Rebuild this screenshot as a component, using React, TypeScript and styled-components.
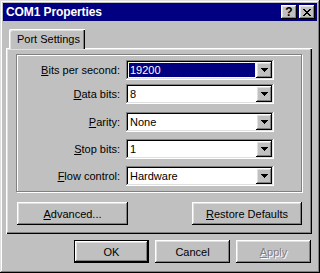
import styled, { createGlobalStyle } from 'styled-components'

const GlobalStyle = createGlobalStyle`
    html, body {
        margin: 0;
        padding: 0;
        background: #c0c0c0;
    }
    body {
        font-family: "Liberation Sans", Arial, sans-serif;
        font-size: 11px;
        color: #000;
    }
`

const raised = `
    box-shadow: inset -1px -1px #000, inset 1px 1px #fff, inset -2px -2px #808080, inset 2px 2px #dfdfdf;
`

const sunken = `
    box-shadow: inset -1px -1px #fff, inset 1px 1px #808080, inset -2px -2px #dfdfdf, inset 2px 2px #000;
`

const Window = styled.div`
    width: 320px;
    height: 273px;
    box-sizing: border-box;
    padding: 3px;
    display: flex;
    flex-direction: column;
    background: #c0c0c0;
    box-shadow: inset -1px -1px #000, inset 1px 1px #dfdfdf, inset -2px -2px #808080, inset 2px 2px #fff;
`

const TitleBar = styled.div`
    height: 18px;
    flex-shrink: 0;
    display: flex;
    align-items: center;
    justify-content: space-between;
    padding: 0 2px 0 3px;
    background: #000080;
`

const Title = styled.span`
    color: #fff;
    font-weight: bold;
    font-size: 12px;
    letter-spacing: -0.1px;
`

const TitleButtons = styled.div`
    display: flex;
    gap: 2px;
`

const TitleButton = styled.div`
    width: 16px;
    height: 14px;
    display: flex;
    align-items: center;
    justify-content: center;
    background: #c0c0c0;
    font-weight: bold;
    font-size: 12px;
    line-height: 14px;
    ${raised}
`

const Body = styled.div`
    display: flex;
    flex-direction: column;
    padding: 8px 5px 0 3px;
`

const TabStrip = styled.div`
    display: flex;
    padding-left: 3px;
`

const Tab = styled.div`
    position: relative;
    z-index: 1;
    width: 76px;
    height: 20px;
    margin-bottom: -1px;
    box-sizing: border-box;
    padding: 4px 0 0 8px;
    background: #c0c0c0;
    border-top-left-radius: 2px;
    box-shadow: inset 1px 1px #fff, inset -1px 0 #000, inset -2px 0 #808080, inset 2px 2px #dfdfdf;
`

const Panel = styled.div`
    height: 186px;
    box-sizing: border-box;
    padding: 6px 10px 0 10px;
    display: flex;
    flex-direction: column;
    box-shadow: inset 1px 1px #fff, inset -1px -1px #000, inset -2px -2px #808080, inset 2px 2px #dfdfdf;
`

const GroupBox = styled.div`
    height: 138px;
    box-sizing: border-box;
    border: 1px solid #808080;
    box-shadow: inset 1px 1px #fff, 1px 1px #fff;
    display: flex;
    flex-direction: column;
`

const FieldRow = styled.div<{ $top: number }>`
    display: grid;
    grid-template-columns: 103px 148px;
    column-gap: 6px;
    align-items: center;
    margin-top: ${(p) => p.$top}px;
`

const FieldLabel = styled.label`
    text-align: right;
    white-space: nowrap;
`

const Combo = styled.div`
    height: 20px;
    box-sizing: border-box;
    padding: 2px;
    display: flex;
    background: #fff;
    ${sunken}
`

const ComboValue = styled.div<{ $selected?: boolean }>`
    flex: 1;
    margin: 1px;
    padding-left: 1px;
    display: flex;
    align-items: center;
    background: ${(p) => (p.$selected ? '#000080' : '#fff')};
    color: ${(p) => (p.$selected ? '#fff' : '#000')};
    outline: ${(p) => (p.$selected ? '1px dotted #ffff80' : 'none')};
`

const DropButton = styled.div`
    width: 16px;
    height: 16px;
    display: flex;
    align-items: center;
    justify-content: center;
    background: #c0c0c0;
    ${raised}
`

const PanelActions = styled.div`
    display: flex;
    justify-content: space-between;
    margin-top: 10px;
    padding-left: 1px;
`

const DialogActions = styled.div`
    display: flex;
    justify-content: flex-end;
    gap: 6px;
    margin-top: 6px;
    padding-right: 1px;
`

const Button = styled.button<{ $width: number; $default?: boolean }>`
    width: ${(p) => p.$width}px;
    height: 23px;
    padding: 0;
    border: none;
    background: #c0c0c0;
    font-family: "Liberation Sans", Arial, sans-serif;
    font-size: 11px;
    color: #000;
    ${(p) =>
        p.$default
            ? 'box-shadow: inset 0 0 0 1px #000, inset -2px -2px #000, inset 2px 2px #fff, inset -3px -3px #808080, inset 3px 3px #dfdfdf;'
            : raised}

    &:disabled {
        color: #808080;
        text-shadow: 1px 1px #fff;
    }
`

const DownArrow = () => (
    <svg width="7" height="4" viewBox="0 0 7 4" shapeRendering="crispEdges">
        <rect x="0" y="0" width="7" height="1" fill="#000" />
        <rect x="1" y="1" width="5" height="1" fill="#000" />
        <rect x="2" y="2" width="3" height="1" fill="#000" />
        <rect x="3" y="3" width="1" height="1" fill="#000" />
    </svg>
)

const CloseGlyph = () => (
    <svg width="8" height="7" viewBox="0 0 8 7" shapeRendering="crispEdges">
        <path d="M0 0h2v1H0zM6 0h2v1H6zM1 1h2v1H1zM5 1h2v1H5zM2 2h4v1H2zM3 3h2v1H3zM2 4h4v1H2zM1 5h2v1H1zM5 5h2v1H5zM0 6h2v1H0zM6 6h2v1H6z" fill="#000" />
    </svg>
)

interface Field {
    key: string
    rest: string
    value: string
    top: number
    selected?: boolean
}

const fields: Field[] = [
    { key: 'B', rest: 'its per second:', value: '19200', top: 5, selected: true },
    { key: 'D', rest: 'ata bits:', value: '8', top: 4 },
    { key: 'P', rest: 'arity:', value: 'None', top: 8 },
    { key: 'S', rest: 'top bits:', value: '1', top: 7 },
    { key: 'F', rest: 'low control:', value: 'Hardware', top: 7 },
]

export default function App() {
    return (
        <>
            <GlobalStyle />
            <Window>
                <TitleBar>
                    <Title>COM1 Properties</Title>
                    <TitleButtons>
                        <TitleButton>?</TitleButton>
                        <TitleButton>
                            <CloseGlyph />
                        </TitleButton>
                    </TitleButtons>
                </TitleBar>
                <Body>
                    <TabStrip>
                        <Tab>Port Settings</Tab>
                    </TabStrip>
                    <Panel>
                        <GroupBox>
                            {fields.map((f) => (
                                <FieldRow key={f.key} $top={f.top}>
                                    <FieldLabel>
                                        <u>{f.key}</u>
                                        {f.rest}
                                    </FieldLabel>
                                    <Combo>
                                        <ComboValue $selected={f.selected}>{f.value}</ComboValue>
                                        <DropButton>
                                            <DownArrow />
                                        </DropButton>
                                    </Combo>
                                </FieldRow>
                            ))}
                        </GroupBox>
                        <PanelActions>
                            <Button $width={111}>
                                <u>A</u>dvanced...
                            </Button>
                            <Button $width={110}>
                                <u>R</u>estore Defaults
                            </Button>
                        </PanelActions>
                    </Panel>
                    <DialogActions>
                        <Button $width={75} $default>
                            OK
                        </Button>
                        <Button $width={75}>Cancel</Button>
                        <Button $width={75} disabled>
                            <u>A</u>pply
                        </Button>
                    </DialogActions>
                </Body>
            </Window>
        </>
    )
}
